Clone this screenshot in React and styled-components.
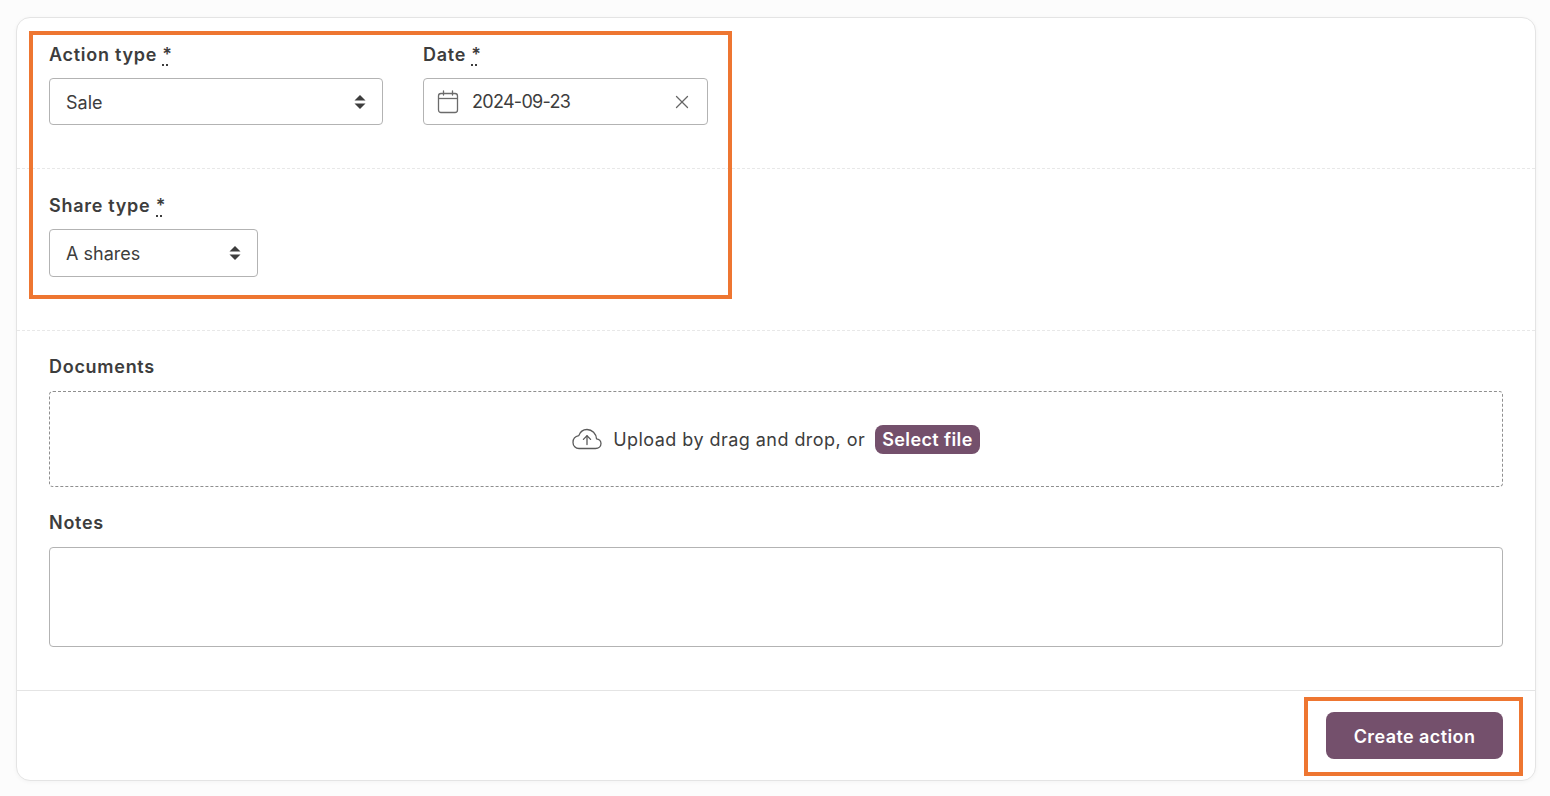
import styled, { createGlobalStyle } from "styled-components";
import { X } from "lucide-react";

const Global = createGlobalStyle`
body{
  margin:0;
  background:#fcfcfc;
  font-family:"Inter","Noto Sans",sans-serif;
  color:#3d3d3d;
}
`

const SelectArrows = () => (
    <svg width="12" height="16" viewBox="0 0 12 16" fill="#3d3d3d">
        <path d="M6 1 L11.5 6.6 H0.5 Z" />
        <path d="M6 15 L11.5 9.4 H0.5 Z" />
    </svg>
)

const CalendarIcon = () => (
    <svg width="22" height="24" viewBox="0 0 22 24" fill="none" stroke="#6b6b6b" strokeWidth="1.3">
        <rect x="1.5" y="3.5" width="19" height="19" rx="2.5" />
        <path d="M1.5 8.5 H20.5" />
        <path d="M6.5 1 V5" strokeLinecap="round" />
        <path d="M15.5 1 V5" strokeLinecap="round" />
    </svg>
)

const CloudIcon = () => (
    <svg width="30" height="22" viewBox="0 0 30 22" fill="none" stroke="#5a5a5a" strokeWidth="1.3" strokeLinecap="round" strokeLinejoin="round">
        <path d="M7 20.5 H23.5 C26.8 20.5 29 18.4 29 15.6 C29 13 27 11 24.5 10.8 C24.2 5.6 20.2 1.5 15 1.5 C11 1.5 8 4 6.8 7.6 C3.4 8.2 1 11 1 14.4 C1 17.8 3.6 20.5 7 20.5 Z" />
        <path d="M15 16.5 V8" />
        <path d="M11.4 11.4 L15 7.8 L18.6 11.4" />
    </svg>
)

const App = () => {

    return (
        <Page>
            <Global />
            <Card>
                <Section $height={151}>
                    <Row>
                        <Field>
                            <Label>Action type <Req>*</Req></Label>
                            <SelectBox $width={334} $height={47}>
                                <SelectValue>Sale</SelectValue>
                                <SelectArrows />
                            </SelectBox>
                        </Field>
                        <Field>
                            <Label>Date <Req>*</Req></Label>
                            <DateBox>
                                <CalendarIcon />
                                <DateText>2024-09-23</DateText>
                                <X size={22} color="#666" strokeWidth={1.4} />
                            </DateBox>
                        </Field>
                    </Row>
                </Section>
                <Section $height={162}>
                    <Field>
                        <Label>Share type <Req>*</Req></Label>
                        <SelectBox $width={209} $height={48}>
                            <SelectValue>A shares</SelectValue>
                            <SelectArrows />
                        </SelectBox>
                    </Field>
                </Section>
                <Lower>
                    <Field>
                        <Label $gap={11}>Documents</Label>
                        <DropZone>
                            <CloudIcon />
                            <DropText>Upload by drag and drop, or</DropText>
                            <SelectFile>Select file</SelectFile>
                        </DropZone>
                    </Field>
                    <Field>
                        <Label $gap={11}>Notes</Label>
                        <Notes />
                    </Field>
                </Lower>
                <Footer>
                    <CreateButton>Create action</CreateButton>
                </Footer>
            </Card>
            <Highlight $left={29} $top={31} $width={703} $height={268} />
            <Highlight $left={1304} $top={697} $width={219} $height={79} />
        </Page>
    )
}

export default App;

const Page = styled.div`
position:relative;
height:796px;
padding:17px 14px 0 16px;
box-sizing:border-box;
overflow:hidden;
`

const Card = styled.div`
width:1520px;
height:764px;
box-sizing:border-box;
background:#fff;
border:1px solid #e4e4e4;
border-radius:14px;
box-shadow:0 1px 4px rgba(0,0,0,0.04);
display:flex;
flex-direction:column;
`

const Section = styled.div`
height:${p => p.$height}px;
flex:none;
box-sizing:border-box;
padding:24px 32px 0;
border-bottom:1px dashed #e8e8e8;
`

const Row = styled.div`
display:flex;
gap:40px;
`

const Field = styled.div`
display:flex;
flex-direction:column;
`

const Label = styled.label`
font-size:18px;
line-height:26px;
font-weight:600;
letter-spacing:.72px;
color:#3d3d3d;
margin-bottom:${p => p.$gap || 10}px;
`

const Req = styled.span`
position:relative;
letter-spacing:0;

&::after{
    content:"";
    position:absolute;
    left:0;
    bottom:-1px;
    width:6px;
    border-bottom:2px dotted #3d3d3d;
}
`

const SelectBox = styled.div`
width:${p => p.$width}px;
height:${p => p.$height}px;
box-sizing:border-box;
border:1px solid #b3b3b3;
border-radius:4px;
padding:0 16px 0 16px;
display:flex;
align-items:center;
justify-content:space-between;
font-size:18px;
color:#3d3d3d;
`

const SelectValue = styled.span`
padding-top:1px;
`

const DateBox = styled.div`
width:285px;
height:47px;
box-sizing:border-box;
border:1px solid #b3b3b3;
border-radius:4px;
padding:0 14px 0 13px;
display:flex;
align-items:center;
font-size:18px;
`

const DateText = styled.span`
margin-left:13px;
flex:1;
letter-spacing:-.7px;
`

const Lower = styled.div`
flex:1;
padding:23px 32px 0;
display:flex;
flex-direction:column;
gap:23px;
`

const DropZone = styled.div`
height:96px;
box-sizing:border-box;
border:1px dashed #8f8f8f;
border-radius:4px;
display:flex;
align-items:center;
justify-content:center;
font-size:18px;
`

const DropText = styled.span`
margin-left:11px;
margin-right:10px;
letter-spacing:.45px;
`

const SelectFile = styled.span`
background:#74506c;
color:#fff;
font-weight:600;
font-size:18px;
letter-spacing:.4px;
line-height:29px;
padding:0 7px;
border-radius:8px;
`

const Notes = styled.div`
height:100px;
box-sizing:border-box;
border:1px solid #b3b3b3;
border-radius:4px;
`

const Footer = styled.div`
height:90px;
flex:none;
box-sizing:border-box;
border-top:1px solid #e4e4e4;
padding:21px 32px 0;
display:flex;
justify-content:flex-end;
align-items:flex-start;
`

const CreateButton = styled.button`
width:177px;
height:47px;
border:none;
border-radius:8px;
padding:2px 0 0;
background:#74506c;
color:#fff;
font-family:inherit;
font-size:18px;
font-weight:600;
letter-spacing:.4px;
`

const Highlight = styled.div`
position:absolute;
left:${p => p.$left}px;
top:${p => p.$top}px;
width:${p => p.$width}px;
height:${p => p.$height}px;
box-sizing:border-box;
border:4px solid #ee7631;
pointer-events:none;
`
